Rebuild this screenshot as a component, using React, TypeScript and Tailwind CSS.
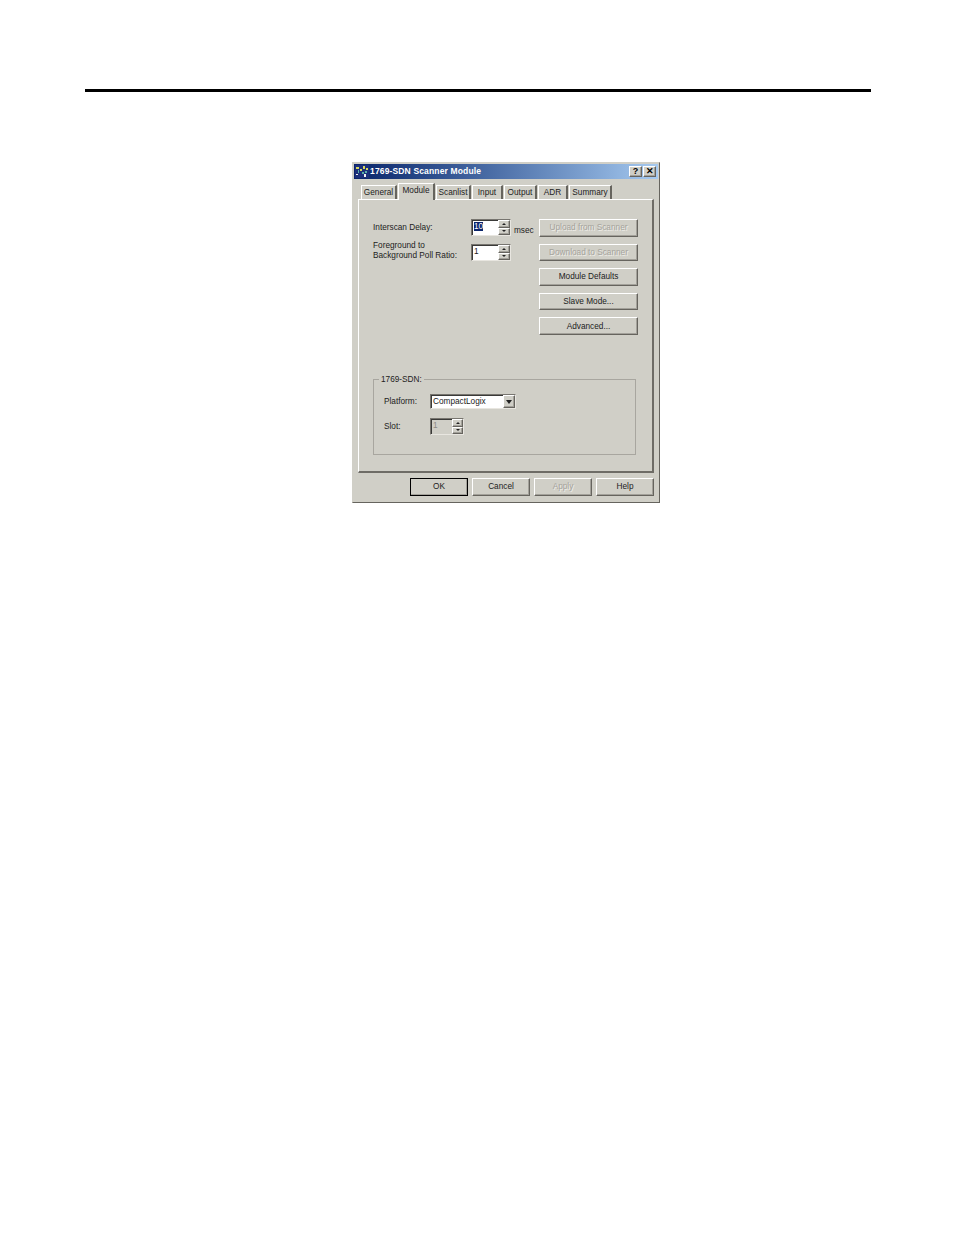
const font = 'font-["Liberation_Sans",Arial,sans-serif]';

const raised =
  'border border-t-white border-l-white border-r-[#66645e] border-b-[#66645e] shadow-[inset_-1px_-1px_0_#a3a19a]';
const sunken =
  'border border-t-[#77756f] border-l-[#77756f] border-r-[#e8e6e0] border-b-[#e8e6e0] shadow-[inset_1px_1px_0_#3a3a38]';

type BtnProps = { label: string; disabled?: boolean; className?: string };

function Btn({ label, disabled, className = '' }: BtnProps) {
  return (
    <div
      className={`flex items-center justify-center bg-[#d0cfc7] pt-px text-[8.25px] leading-none ${raised} ${
        disabled ? 'text-[#a5a39c] [text-shadow:1px_1px_0_#eeede8]' : 'text-[#222]'
      } ${className}`}
    >
      {label}
    </div>
  );
}

function Tab({ label, width, active }: { label: string; width: string; active?: boolean }) {
  return (
    <div
      className={`flex items-center justify-center border-l border-t border-t-white border-l-white border-r-2 border-r-[#66645e] bg-[#d0cfc7] text-[8.25px] leading-none text-[#222] ${width} ${
        active ? 'relative z-10 -mb-px h-[17px] pb-[2px]' : 'h-[14px] pt-px'
      }`}
    >
      {label}
    </div>
  );
}

function Spinner({ small }: { small?: boolean }) {
  return (
    <div className={`flex shrink-0 flex-col ${small ? 'w-[11px]' : 'w-[12px]'}`}>
      {[0, 1].map((i) => (
        <div key={i} className={`flex h-1/2 items-center justify-center bg-[#d0cfc7] ${raised}`}>
          <svg width="4" height="2" viewBox="0 0 4 2">
            <path d={i === 0 ? 'M2 0 4 2H0z' : 'M0 0h4L2 2z'} fill="#222" />
          </svg>
        </div>
      ))}
    </div>
  );
}

function NumberBox({ value, selected }: { value: string; selected?: boolean }) {
  return (
    <div className={`flex h-[17px] w-[40px] bg-white ${sunken}`}>
      <div className="flex-1 pl-[2px] pt-[1px] text-[8.25px] leading-[11px] text-[#222]">
        {selected ? <span className="bg-[#0a246a] text-white">{value}</span> : value}
      </div>
      <Spinner />
    </div>
  );
}

function AppIcon() {
  return (
    <svg width="14" height="13" viewBox="0 0 14 13" className="shrink-0">
      <rect width="14" height="13" fill="#1c2f7a" />
      <path d="M1 2h3v2H1zM5 4h2v2H5zM8 1h2v3H8zM11 3h2v2h-2z" fill="#d8d860" />
      <path d="M3 5h1v3H3zM10 6h2v2h-2zM7 7h2v2H7z" fill="#58b0a8" />
      <path d="M9 9h2v3H9zM1 9h2v1H1z" fill="#f2f2f2" />
    </svg>
  );
}

export default function App() {
  return (
    <div className={`h-[1235px] w-[954px] bg-white pl-[85px] pr-[83px] pt-[89px] ${font}`}>
      <div className="h-[3px] bg-black" />

      <div className="ml-[267px] mt-[70px] h-[341px] w-[308px] border border-[#d0cfc7] border-b-[#66645e] border-r-[#66645e] bg-[#d0cfc7] px-[5px] pt-px">
        {/* title bar */}
        <div className="-mx-[4px] flex h-[15px] items-center bg-gradient-to-r from-[#0a246a] to-[#a6caf0] pl-[1px] pr-[2px]">
          <AppIcon />
          <span className="ml-[1px] text-[8.5px] font-bold leading-none tracking-[0.15px] text-white">
            1769-SDN Scanner Module
          </span>
          <div className="ml-auto flex gap-[1px]">
            <div className={`flex h-[11px] w-[13px] items-center justify-center bg-[#d0cfc7] text-[9px] font-bold leading-none text-black ${raised}`}>
              ?
            </div>
            <div className={`flex h-[11px] w-[13px] items-center justify-center bg-[#d0cfc7] text-[9px] font-bold leading-none text-black ${raised}`}>
              ✕
            </div>
          </div>
        </div>

        {/* tabs */}
        <div className="ml-[3px] mt-[4px] flex h-[16px] items-end gap-[1px]">
          <Tab label="General" width="w-[36px]" />
          <Tab label="Module" width="w-[37px]" active />
          <Tab label="Scanlist" width="w-[35px]" />
          <Tab label="Input" width="w-[31px]" />
          <Tab label="Output" width="w-[33px]" />
          <Tab label="ADR" width="w-[30px]" />
          <Tab label="Summary" width="w-[43px]" />
        </div>

        {/* tab panel */}
        <div className="h-[274px] w-[296px] border border-t-white border-l-white border-r-2 border-b-2 border-r-[#6e6c66] border-b-[#6e6c66] pl-[14px] pr-[14px] pt-[19px]">
          <div className="flex h-[116px] justify-between">
            <div className="text-[8.25px] leading-[10px] text-[#222]">
              <div className="flex h-[17px] items-start">
                <div className="w-[98px] pt-[4px]">Interscan Delay:</div>
                <NumberBox value="10" selected />
                <div className="ml-[3px] pt-[7px]">msec</div>
              </div>
              <div className="mt-[8px] flex items-start">
                <div className="-mt-[3px] w-[98px]">
                  Foreground to
                  <br />
                  Background Poll Ratio:
                </div>
                <NumberBox value="1" />
              </div>
            </div>
            <div className="flex w-[99px] flex-col gap-[7px]">
              <Btn label="Upload from Scanner" disabled className="h-[18px]" />
              <Btn label="Download to Scanner" disabled className="h-[18px]" />
              <Btn label="Module Defaults" className="h-[18px]" />
              <Btn label="Slave Mode..." className="h-[18px]" />
              <Btn label="Advanced..." className="h-[18px]" />
            </div>
          </div>

          {/* group box */}
          <div className="relative mt-[44px] h-[76px] w-[263px] border border-[#a8a69f] pl-[10px] pt-[14px] text-[8.25px] leading-none text-[#222]">
            <div className="absolute -top-[4px] left-[5px] bg-[#d0cfc7] px-[2px]">1769-SDN:</div>
            <div className="flex items-center">
              <div className="w-[46px] pt-[2px]">Platform:</div>
              <div className={`flex h-[15px] w-[86px] items-center bg-white pl-[2px] pt-px ${sunken}`}>
                <span className="flex-1">CompactLogix</span>
                <div className={`-mt-px flex h-[13px] w-[12px] items-center justify-center bg-[#d0cfc7] ${raised}`}>
                  <svg width="6" height="4" viewBox="0 0 6 4">
                    <path d="M0 0h6L3 4z" fill="#222" />
                  </svg>
                </div>
              </div>
            </div>
            <div className="mt-[9px] flex items-center">
              <div className="w-[46px] pt-px">Slot:</div>
              <div className={`flex h-[17px] w-[34px] bg-[#d0cfc7] ${sunken}`}>
                <div className="flex-1 pl-[2px] pt-[3px] text-[#8c8a84]">1</div>
                <Spinner small />
              </div>
            </div>
          </div>
        </div>

        {/* footer buttons */}
        <div className="mt-[5px] flex justify-end gap-[4px]">
          <Btn label="OK" className="h-[18px] w-[58px] !border-black" />
          <Btn label="Cancel" className="h-[18px] w-[58px]" />
          <Btn label="Apply" disabled className="h-[18px] w-[58px]" />
          <Btn label="Help" className="h-[18px] w-[58px]" />
        </div>
      </div>
    </div>
  );
}
